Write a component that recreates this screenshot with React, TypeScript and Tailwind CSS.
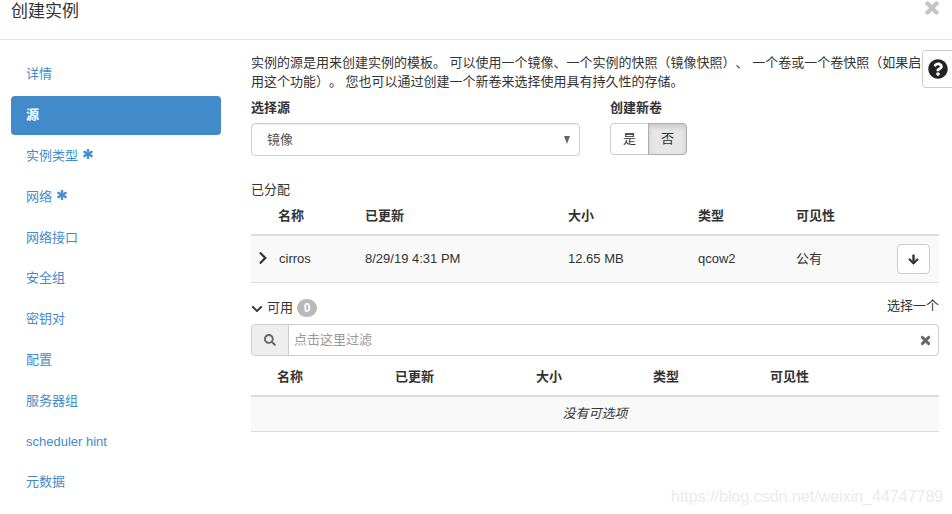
import React from "react";
import {
  FaArrowDown,
  FaAsterisk,
  FaChevronDown,
  FaChevronRight,
  FaQuestionCircle,
  FaSearch,
  FaTimes,
} from "react-icons/fa";

const steps = [
  { label: "详情" },
  { label: "源", active: true },
  { label: "实例类型", required: true },
  { label: "网络", required: true },
  { label: "网络接口" },
  { label: "安全组" },
  { label: "密钥对" },
  { label: "配置" },
  { label: "服务器组" },
  { label: "scheduler hint" },
  { label: "元数据" },
];

const App = () => {
  return (
    <div className="relative w-[952px] h-[514px] overflow-hidden bg-white text-[13px] leading-[19px] text-[#333] font-['Liberation_Sans','Noto_Sans_CJK_SC',sans-serif]">
      <div className="h-10 border-b border-[#e5e5e5] pl-[11px] pt-[1px] text-[17px] leading-[22px]">创建实例</div>
      <FaTimes stroke="currentColor" strokeWidth={30} className="absolute left-[925px] top-[-1px] w-[14px] h-[18px] text-[#c4c4c4]" />

      <div className="flex">
        <div className="w-[251px] pl-[11px] pr-[30px] pt-[15px] flex flex-col gap-[2px]">
          {steps.map((step) => (
            <div
              key={step.label}
              className={
                step.active
                  ? "h-[38.8px] flex items-center px-[15px] pb-[1px] rounded bg-[#428bca] text-white font-bold"
                  : "h-[38.8px] flex items-center px-[15px] pb-[1px] rounded text-[#428bca]"
              }
            >
              {step.label}
              {step.required && (
                <FaAsterisk stroke="currentColor" strokeWidth={40} className="ml-[5px] mb-[3px] w-[10px] h-[10px]" />
              )}
            </div>
          ))}
        </div>

        <div className="w-[688px] pt-[13px]">
          <p className="w-[672px] h-[38px] [text-spacing-trim:space-all]">
            实例的源是用来创建实例的模板。 可以使用一个镜像、一个实例的快照（镜像快照）、 一个卷或一个卷快照（如果启用这个功能）。 您也可以通过创建一个新卷来选择使用具有持久性的存储。
          </p>

          <div className="flex mt-[7px]">
            <div className="w-[359px]">
              <div className="font-bold">选择源</div>
              <div className="mt-[6px] w-[329px] h-[33px] flex items-center justify-between pl-[15px] pr-[9px] border border-[#ccc] rounded text-[#555] shadow-[inset_0_1px_1px_rgba(0,0,0,0.075)]">
                <span>镜像</span>
                <span className="w-0 h-0 border-x-[3.5px] border-x-transparent border-t-[8px] border-t-[#666]" />
              </div>
            </div>
            <div>
              <div className="font-bold">创建新卷</div>
              <div className="mt-[6px] flex h-[32px] w-[77px]">
                <div className="w-[39px] pb-[2px] flex items-center justify-center border border-[#ccc] rounded-l">是</div>
                <div className="w-[39px] pb-[2px] -ml-px flex items-center justify-center border border-[#adadad] rounded-r bg-[#e6e6e6] shadow-[inset_0_3px_5px_rgba(0,0,0,0.125)]">否</div>
              </div>
            </div>
          </div>

          <div className="mt-[24px]">已分配</div>
          <div className="mt-[7px] h-[20px] grid grid-cols-[27px_87px_203px_130px_98px_1fr] font-bold">
            <div />
            <div>名称</div>
            <div>已更新</div>
            <div>大小</div>
            <div>类型</div>
            <div>可见性</div>
          </div>
          <div className="mt-[8px] h-[49px] grid grid-cols-[27px_87px_203px_130px_98px_1fr] items-center bg-[#f9f9f9] border-t-2 border-b border-t-[#ddd] border-b-[#ddd]">
            <FaChevronRight className="ml-[7px] mb-[2px] w-[10px] h-[14px] text-[#333]" />
            <div className="pl-px pb-[2px]">cirros</div>
            <div className="pb-[2px]">8/29/19 4:31 PM</div>
            <div className="pb-[2px]">12.65 MB</div>
            <div className="pb-[2px]">qcow2</div>
            <div className="flex items-center justify-between pr-[9px]">
              <span className="pb-[2px]">公有</span>
              <span className="w-[33px] h-[30px] flex items-center justify-center bg-white border border-[#ccc] rounded">
                <FaArrowDown stroke="currentColor" strokeWidth={30} className="w-[11px] h-[11px]" />
              </span>
            </div>
          </div>

          <div className="mt-[12px] h-[24px] flex items-start justify-between">
            <div className="flex items-center">
              <FaChevronDown className="w-[12px] h-[12px] mt-[5px]" />
              <span className="ml-[4px] mt-[2px]">可用</span>
              <span className="ml-[4px] mt-[4px] w-[20px] h-[18px] flex items-center justify-center rounded-full bg-[#b9b9b9] text-white text-xs font-bold">0</span>
            </div>
            <span className="mt-[1px]">选择一个</span>
          </div>

          <div className="mt-[5px] h-[32px] flex border border-[#ccc] rounded">
            <div className="w-[37px] flex items-center justify-center bg-[#eee] border-r border-[#ccc] rounded-l">
              <FaSearch className="w-[12px] h-[12px] text-[#666]" />
            </div>
            <div className="flex-1 flex items-center justify-between pl-[5px] pr-[8px] pb-[2px] text-[#999]">
              <span>点击这里过滤</span>
              <FaTimes stroke="currentColor" strokeWidth={30} className="w-[9px] h-[13px] mt-[2px] text-[#666]" />
            </div>
          </div>

          <div className="mt-[11px] h-[20px] grid grid-cols-[26px_118px_141px_117px_117px_1fr] font-bold">
            <div />
            <div>名称</div>
            <div>已更新</div>
            <div>大小</div>
            <div>类型</div>
            <div>可见性</div>
          </div>
          <div className="mt-[8px] h-[37px] pb-[2px] flex items-center justify-center bg-[#f9f9f9] border-t-2 border-b border-t-[#ddd] border-b-[#ddd] italic">
            没有可选项
          </div>
        </div>
      </div>

      <div className="absolute left-[922px] top-[50px] w-[40px] h-[38px] pl-[5px] flex items-center bg-white border border-[#ccc] rounded">
        <FaQuestionCircle className="w-[20px] h-[20px] text-[#222]" />
      </div>

      <div className="absolute left-[671px] top-[487px] text-base leading-[19px] text-[#ebebeb]">
        https://blog.csdn.net/weixin_44747789
      </div>
    </div>
  );
};

export default App;
